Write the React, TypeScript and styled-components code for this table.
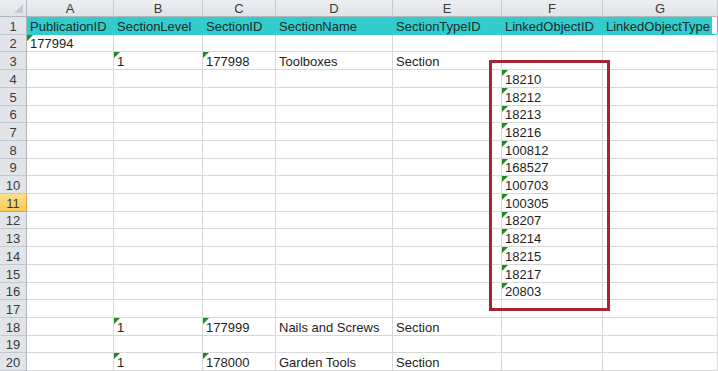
import { Fragment } from "react";
import styled, { createGlobalStyle } from "styled-components";

const GlobalStyle = createGlobalStyle`
  html, body {
    margin: 0;
    padding: 0;
    background: #ffffff;
    overflow: hidden;
  }
  body {
    font-family: "Liberation Sans", Arial, sans-serif;
  }
`;

const Sheet = styled.div`
  position: relative;
  width: 718px;
  height: 371px;
  display: grid;
  grid-template-columns: 27px 87px 89px 73px 117px 109px 101px 1fr;
  grid-template-rows: 17px repeat(20, 1fr);
  overflow: hidden;
  font-size: 13px;
  color: #1e1e1e;
`;

const Corner = styled.div`
  position: relative;
  background: linear-gradient(#eceef2, #e0e3e8);
  border-right: 1px solid #b3b8bf;
  border-bottom: 1px solid #b3b8bf;

  &::after {
    content: "";
    position: absolute;
    right: 3px;
    bottom: 3px;
    border-left: 9px solid transparent;
    border-bottom: 9px solid #c6cad0;
  }
`;

const ColHead = styled.div`
  display: flex;
  align-items: center;
  justify-content: center;
  background: linear-gradient(#eceef2, #e0e3e8);
  border-right: 1px solid #c6cad1;
  border-bottom: 1px solid #b3b8bf;
  font-size: 13px;
  color: #3b3b3b;
`;

const RowHead = styled.div<{ $active?: boolean }>`
  display: flex;
  align-items: flex-end;
  justify-content: center;
  box-sizing: border-box;
  background: ${(p) => (p.$active ? "linear-gradient(#fbe08a, #f6ca57)" : "#e1e5ea")};
  border-right: 1px solid ${(p) => (p.$active ? "#e2a23a" : "#b3b8bf")};
  border-bottom: 1px solid ${(p) => (p.$active ? "#e2a23a" : "#c4c9d0")};
  color: #3b3b3b;
  font-size: 13px;
`;

const Cell = styled.div<{ $title?: boolean; $flag?: boolean; $last?: boolean }>`
  position: relative;
  display: flex;
  align-items: flex-end;
  padding: 0 0 0 3px;
  box-sizing: border-box;
  white-space: nowrap;
  min-width: 0;
  background: ${(p) =>
    p.$title
      ? p.$last
        ? "linear-gradient(to right, #33cccc calc(100% - 5px), #ffffff 0)"
        : "#33cccc"
      : "#ffffff"};
  border-right: 1px solid ${(p) => (p.$title ? "transparent" : "#d6d8da")};
  border-bottom: 1px solid ${(p) => (p.$title ? "#33cccc" : "#d6d8da")};
  color: ${(p) => (p.$title ? "#1c2b2b" : "#1e1e1e")};

  ${(p) =>
    p.$flag &&
    `
    &::before {
      content: "";
      position: absolute;
      left: 0;
      top: 0;
      border-top: 6px solid #1f8a1f;
      border-right: 6px solid transparent;
    }
  `}
`;

const Highlight = styled.div`
  position: absolute;
  left: 489px;
  top: 60px;
  width: 121px;
  height: 251px;
  box-sizing: border-box;
  border: 3px solid #a52633;
  pointer-events: none;
`;

const columns = ["A", "B", "C", "D", "E", "F", "G"];

type Value = { text: string; flag?: boolean };
type Row = Partial<Record<string, Value>>;

const titles = [
  "PublicationID",
  "SectionLevel",
  "SectionID",
  "SectionName",
  "SectionTypeID",
  "LinkedObjectID",
  "LinkedObjectType",
];

const section = (id: string, name: string): Row => ({
  B: { text: "1", flag: true },
  C: { text: id, flag: true },
  D: { text: name },
  E: { text: "Section" },
});

const linked = [
  "18210",
  "18212",
  "18213",
  "18216",
  "100812",
  "168527",
  "100703",
  "100305",
  "18207",
  "18214",
  "18215",
  "18217",
  "20803",
];

const rows: Row[] = [
  Object.fromEntries(columns.map((c, i) => [c, { text: titles[i] }])),
  { A: { text: "177994", flag: true } },
  section("177998", "Toolboxes"),
  ...linked.map((id) => ({ F: { text: id, flag: true } })),
  {},
  section("177999", "Nails and Screws"),
  {},
  section("178000", "Garden Tools"),
];

export default function App() {
  return (
    <>
      <GlobalStyle />
      <Sheet>
        <Corner />
        {columns.map((c) => (
          <ColHead key={c}>{c}</ColHead>
        ))}
        {rows.map((row, r) => (
          <Fragment key={r}>
            <RowHead $active={r + 1 === 11}>{r + 1}</RowHead>
            {columns.map((c, i) => {
              const v = row[c];
              return (
                <Cell
                  key={c}
                  $title={r === 0}
                  $last={i === columns.length - 1}
                  $flag={v?.flag}
                >
                  {v?.text}
                </Cell>
              );
            })}
          </Fragment>
        ))}
        <Highlight />
      </Sheet>
    </>
  );
}
